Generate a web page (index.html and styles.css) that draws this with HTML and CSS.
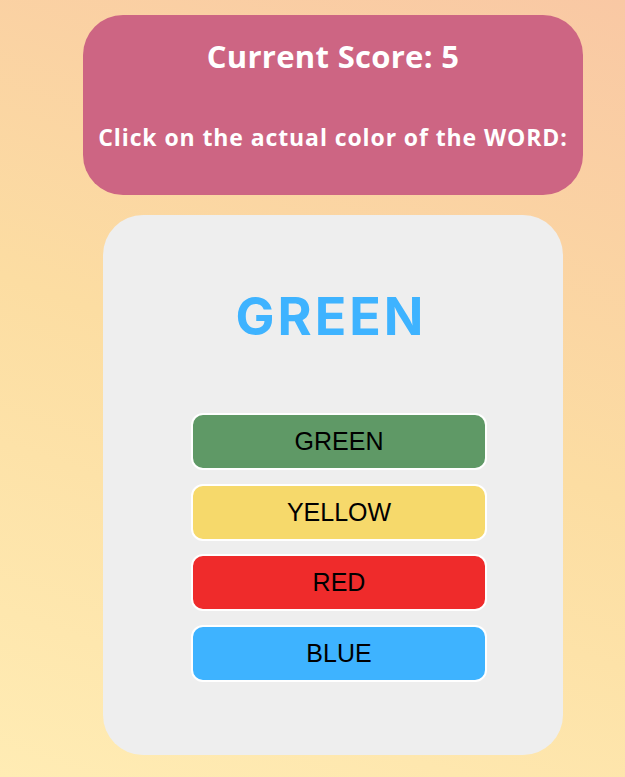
FILE: index.html
```html
<!DOCTYPE html>
<html>
<head>
<meta charset="utf-8">
<link rel="stylesheet" href="styles.css">
</head>
<body>
<div class="page">
  <div class="header">
    <h1 class="score">Current Score: 5</h1>
    <h2 class="prompt">Click on the actual color of the WORD:</h2>
  </div>
  <div class="card">
    <div class="word">GREEN</div>
    <div class="buttons">
      <button class="btn btn-green">GREEN</button>
      <button class="btn btn-yellow">YELLOW</button>
      <button class="btn btn-red">RED</button>
      <button class="btn btn-blue">BLUE</button>
    </div>
  </div>
</div>
</body>
</html>
```
FILE: styles.css
```css
html, body {
  margin: 0;
  padding: 0;
  height: 100%;
}
body {
  background: linear-gradient(20deg, #ffecb4 0%, #fcdda2 50%, #f9c8a4 100%);
  font-family: "Open Sans", "Liberation Sans", sans-serif;
  overflow: hidden;
}
.page {
  display: flex;
  flex-direction: column;
  align-items: center;
  padding-top: 15px;
  padding-left: 41px;
  gap: 20px;
}
.header {
  width: 500px;
  height: 180px;
  box-sizing: border-box;
  background: #cd6583;
  border-radius: 40px;
  color: #ffffff;
  text-align: center;
  display: flex;
  flex-direction: column;
  align-items: center;
  padding-top: 22px;
}
.score {
  margin: 0;
  font-size: 31px;
  font-weight: 700;
  line-height: 38px;
  letter-spacing: 0.3px;
}
.prompt {
  margin: 48px 0 0;
  font-size: 23px;
  font-weight: 700;
  line-height: 28px;
  letter-spacing: 0.9px;
}
.card {
  width: 460px;
  height: 540px;
  box-sizing: border-box;
  background: #eeeeee;
  border-radius: 40px;
  display: flex;
  flex-direction: column;
  align-items: center;
  padding-top: 76px;
}
.word {
  font-family: "Inter", "Open Sans", sans-serif;
  font-weight: 700;
  font-size: 52px;
  line-height: 52px;
  letter-spacing: 3px;
  color: #3eb3ff;
  margin-right: 4px;
}
.buttons {
  margin-top: 70px;
  margin-left: 12px;
  display: flex;
  flex-direction: column;
  gap: 13.5px;
}
.btn {
  width: 296px;
  height: 57px;
  box-sizing: border-box;
  border: 2px solid #ffffff;
  border-radius: 12px;
  font-family: "Liberation Sans", Arial, sans-serif;
  font-size: 25px;
  color: #000000;
  padding: 0;
}
.btn-green { background: #5f9966; }
.btn-yellow { background: #f6d96b; }
.btn-red { background: #ef2b2b; }
.btn-blue { background: #3eb3ff; }
```
